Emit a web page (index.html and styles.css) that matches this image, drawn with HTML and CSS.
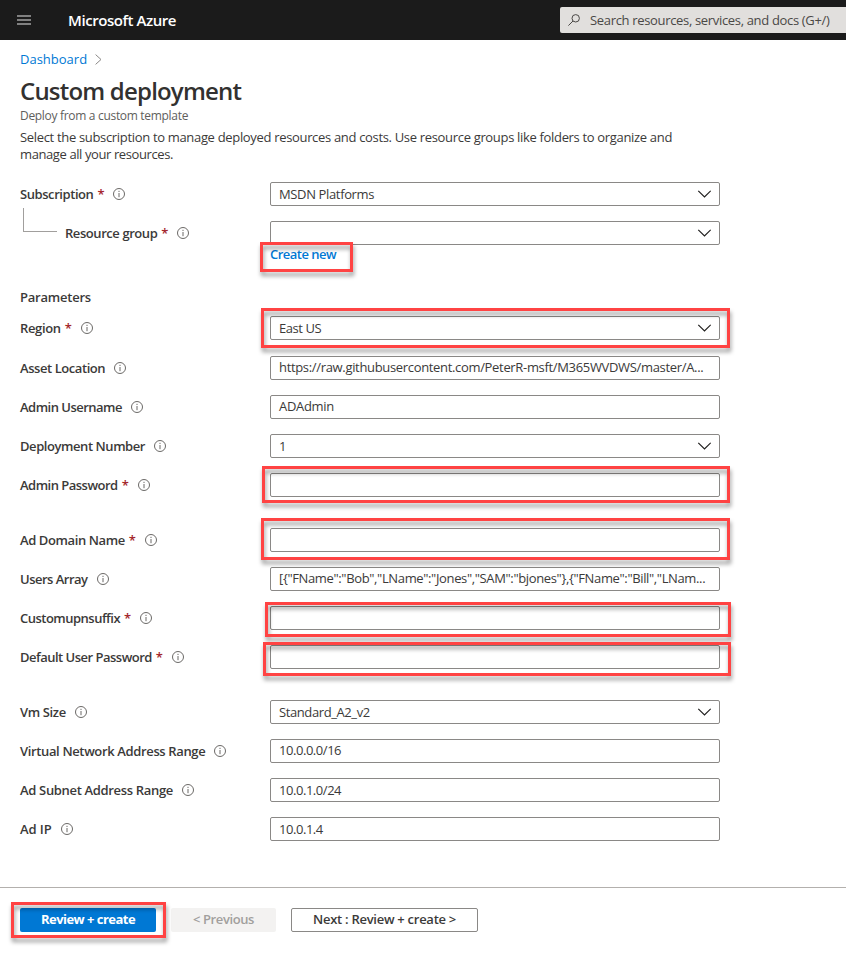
FILE: index.html
```html
<!DOCTYPE html>
<html lang="en">
<head>
<meta charset="utf-8">
<title>Custom deployment - Microsoft Azure</title>
<link rel="stylesheet" href="styles.css">
</head>
<body>
<svg class="defs" aria-hidden="true">
  <symbol id="info" viewBox="0 0 12 12"><circle cx="6" cy="6" r="5.5" fill="none" stroke="#6b6967" stroke-width="1"/><path d="M6 5v4.2M6 2.8v1.2" stroke="#6b6967" stroke-width="1"/></symbol>
  <symbol id="chev" viewBox="0 0 14 8"><path d="M1.3.8 7.5 7 13.7.8" fill="none" stroke="#201f1e" stroke-width="1.2"/></symbol>
</svg>
<header class="topbar">
  <svg class="burger" viewBox="0 0 14 10"><path d="M0 1h14M0 5h14M0 9h14" stroke="#a3a3a3" stroke-width="1.7"/></svg>
  <span class="brand">Microsoft Azure</span>
  <div class="search">
    <svg class="glass" viewBox="0 0 12 12"><circle cx="7.7" cy="4.3" r="3.7" fill="none" stroke="#4a4846"/><path d="M5 7 .4 11.6" stroke="#4a4846"/></svg>
    <span>Search resources, services, and docs (G+/)</span>
  </div>
</header>
<main class="page">
  <nav class="crumbs"><a>Dashboard</a><svg viewBox="0 0 7 11"><path d="M.6.6 6 5.5.6 10.4" fill="none" stroke="#8a8886"/></svg></nav>
  <h1>Custom deployment</h1>
  <p class="subtitle">Deploy from a custom template</p>
  <p class="intro">Select the subscription to manage deployed resources and costs. Use resource groups like folders to organize and<br><span class="t40">manage all your resources.</span></p>

  <section class="form">
    <div class="row"><label><span class="t43">Subscription</span><b>*</b><svg><use href="#info"/></svg></label>
      <div class="field select"><span class="t36">MSDN Platforms</span><svg><use href="#chev"/></svg></div></div>
    <div class="row nested"><label><span class="t43">Resource group</span><b>*</b><svg><use href="#info"/></svg></label>
      <div class="field select"><span></span><svg><use href="#chev"/></svg></div></div>
    <div class="link-row"><a class="create">Create new<i class="mark mark-create"></i></a></div>
    <h2>Parameters</h2>
    <div class="row region"><label><span class="t36">Region</span><b>*</b><svg><use href="#info"/></svg></label>
      <div class="field select"><span class="t45">East US</span><svg><use href="#chev"/></svg><i class="mark mark-region"></i></div></div>
    <div class="row"><label><span class="t43">Asset Location</span><svg><use href="#info"/></svg></label>
      <div class="field up"><span>https://raw.githubusercontent.com/PeterR-msft/M365WVDWS/master/A...</span></div></div>
    <div class="row"><label><span class="t51">Admin Username</span><svg><use href="#info"/></svg></label>
      <div class="field up"><span>ADAdmin</span></div></div>
    <div class="row"><label><span class="t43">Deployment Number</span><svg><use href="#info"/></svg></label>
      <div class="field select"><span>1</span><svg><use href="#chev"/></svg></div></div>
    <div class="row spaced"><label><span class="t51">Admin Password</span><b>*</b><svg><use href="#info"/></svg></label>
      <div class="field"><i class="mark mark-password"></i></div></div>
    <div class="row"><label><span class="t40">Ad Domain Name</span><b>*</b><svg><use href="#info"/></svg></label>
      <div class="field"><i class="mark mark-domain"></i></div></div>
    <div class="row"><label><span class="t51">Users Array</span><svg><use href="#info"/></svg></label>
      <div class="field up"><span class="t36">[{"FName":"Bob","LName":"Jones","SAM":"bjones"},{"FName":"Bill","LNam...</span></div></div>
    <div class="row"><label><span class="t51">Customupnsuffix</span><b>*</b><svg><use href="#info"/></svg></label>
      <div class="field"><i class="mark mark-suffix"></i></div></div>
    <div class="row spaced"><label><span class="t51">Default User Password</span><b>*</b><svg><use href="#info"/></svg></label>
      <div class="field"><i class="mark mark-default"></i></div></div>
    <div class="row"><label><span class="t36">Vm Size</span><svg><use href="#info"/></svg></label>
      <div class="field select"><span class="t40">Standard_A2_v2</span><svg><use href="#chev"/></svg></div></div>
    <div class="row"><label><span class="t36">Virtual Network Address Range</span><svg><use href="#info"/></svg></label>
      <div class="field up"><span class="t45">10.0.0.0/16</span></div></div>
    <div class="row"><label><span>Ad Subnet Address Range</span><svg><use href="#info"/></svg></label>
      <div class="field"><span class="t45">10.0.1.0/24</span></div></div>
    <div class="row"><label><span class="t10">Ad IP</span><svg><use href="#info"/></svg></label>
      <div class="field"><span class="t45">10.0.1.4</span></div></div>
  </section>
</main>
<footer class="actions">
  <div class="btn primary">Review + create<i class="mark mark-review"></i></div>
  <div class="btn disabled">&lt; Previous</div>
  <div class="btn outline">Next : Review + create &gt;</div>
</footer>
</body>
</html>
```
FILE: styles.css
```css
* { box-sizing: border-box; }
body {
  margin: 0;
  width: 846px;
  height: 968px;
  overflow: hidden;
  background: #fff;
  color: #3b3a39;
  font: 400 13px/18px "Open Sans", "Noto Sans", sans-serif;
  letter-spacing: -0.33px;
}
.defs { display: none; }
svg { display: block; flex: none; }
a { color: #0078d4; }

.topbar {
  display: flex;
  align-items: center;
  height: 40px;
  padding-left: 17px;
  background: #1b1b1b;
}
.burger { width: 14px; height: 10px; }
.brand {
  flex: none;
  width: 529px;
  padding-left: 37px;
  color: #fff;
  font-size: 15px;
  font-weight: 600;
  letter-spacing: -0.43px;
}
.search {
  display: flex;
  flex: 1;
  align-items: center;
  gap: 10px;
  height: 26px;
  padding-left: 8px;
  border-radius: 2px 0 0 2px;
  background: #e1dfdd;
  color: #4a4846;
  white-space: nowrap;
}
.glass { width: 12px; height: 12px; }

.page { height: 847px; padding: 10px 20px 0; }
.crumbs { display: flex; align-items: center; gap: 8px; letter-spacing: 0; }
.crumbs svg { width: 7px; height: 11px; }
h1 {
  margin: 8px 0 0;
  color: #323130;
  font-size: 24px;
  font-weight: 600;
  line-height: 30px;
  letter-spacing: -0.8px;
}
.subtitle { margin: 2px 0 0; color: #605e5c; font-size: 12px; line-height: 16px; letter-spacing: -0.31px; }
.intro { margin: 5px 0 0; line-height: 17px; white-space: nowrap; letter-spacing: -0.326px; }

.form { padding-top: 19px; }
.row { display: flex; align-items: center; height: 24px; margin-bottom: 15px; }
.row.spaced { margin-bottom: 31px; }
.row.region { margin-bottom: 16px; }
label { display: flex; align-items: center; width: 250px; font-weight: 600; }
label b { width: 6px; margin-left: 4px; color: #a4262c; font-weight: 600; letter-spacing: 0; }
label svg { width: 12px; height: 12px; margin-left: 9px; }
label b + svg { margin-left: 10px; }
.nested { position: relative; margin-bottom: 0; }
.nested label { padding-left: 45px; }
.nested::before {
  content: "";
  position: absolute;
  left: 3px;
  top: -13px;
  width: 33px;
  height: 23px;
  border: solid #a19f9d;
  border-width: 0 0 1px 1px;
}
.field {
  position: relative;
  display: flex;
  align-items: center;
  justify-content: space-between;
  width: 450px;
  height: 24px;
  padding: 0 8px;
  border: 1px solid #8a8886;
  border-radius: 2px;
  white-space: nowrap;
}
.field svg { width: 14px; height: 8px; }
.up > span { margin-top: -2px; }
.link-row { display: flex; height: 18px; padding-left: 250px; }
.create { position: relative; font-weight: 600; letter-spacing: -0.52px; }
h2 { margin: 25px 0 10px; font-size: 13px; font-weight: 600; line-height: 18px; letter-spacing: -0.22px; }

/* letter-spacing steps, in hundredths of a pixel */
.t10 { letter-spacing: -0.1px; }
.t36 { letter-spacing: -0.36px; }
.t40 { letter-spacing: -0.4px; }
.t43 { letter-spacing: -0.43px; }
.t45 { letter-spacing: -0.45px; }
.t51 { letter-spacing: -0.51px; }

/* red call-out frames over the controls */
.mark {
  position: absolute;
  z-index: 1;
  border: 3px solid #ff4343;
  filter: drop-shadow(1px 4px 2px rgba(0, 0, 0, 0.4));
}
.mark-create { left: -10px; top: -3px; width: 93px; height: 30px; }
.mark-region { inset: -9px -11px -9px -10px; }
.mark-password { inset: -8px -11px -7px -9px; }
.mark-domain { inset: -11px -11px -9px -10px; }
.mark-suffix { inset: -5px -12px -8px -6px; }
.mark-default { inset: -4px -12px -8px -8px; }
.mark-review { inset: -6px -10px -6px -9px; }

.actions {
  display: flex;
  height: 81px;
  padding: 20px 20px 0;
  border-top: 1px solid #b3b0ad;
}
.btn {
  position: relative;
  height: 24px;
  border-radius: 2px;
  font-weight: 600;
  line-height: 22px;
  text-align: center;
  white-space: nowrap;
}
.primary { width: 136px; background: #0078d4; color: #fff; font-weight: 700; letter-spacing: -0.53px; }
.disabled { width: 105px; margin-left: 15px; background: #f3f2f1; color: #a19f9d; letter-spacing: -0.4px; }
.outline { width: 187px; margin-left: 15px; border: 1px solid #8a8886; line-height: 20px; letter-spacing: -0.27px; }
```
